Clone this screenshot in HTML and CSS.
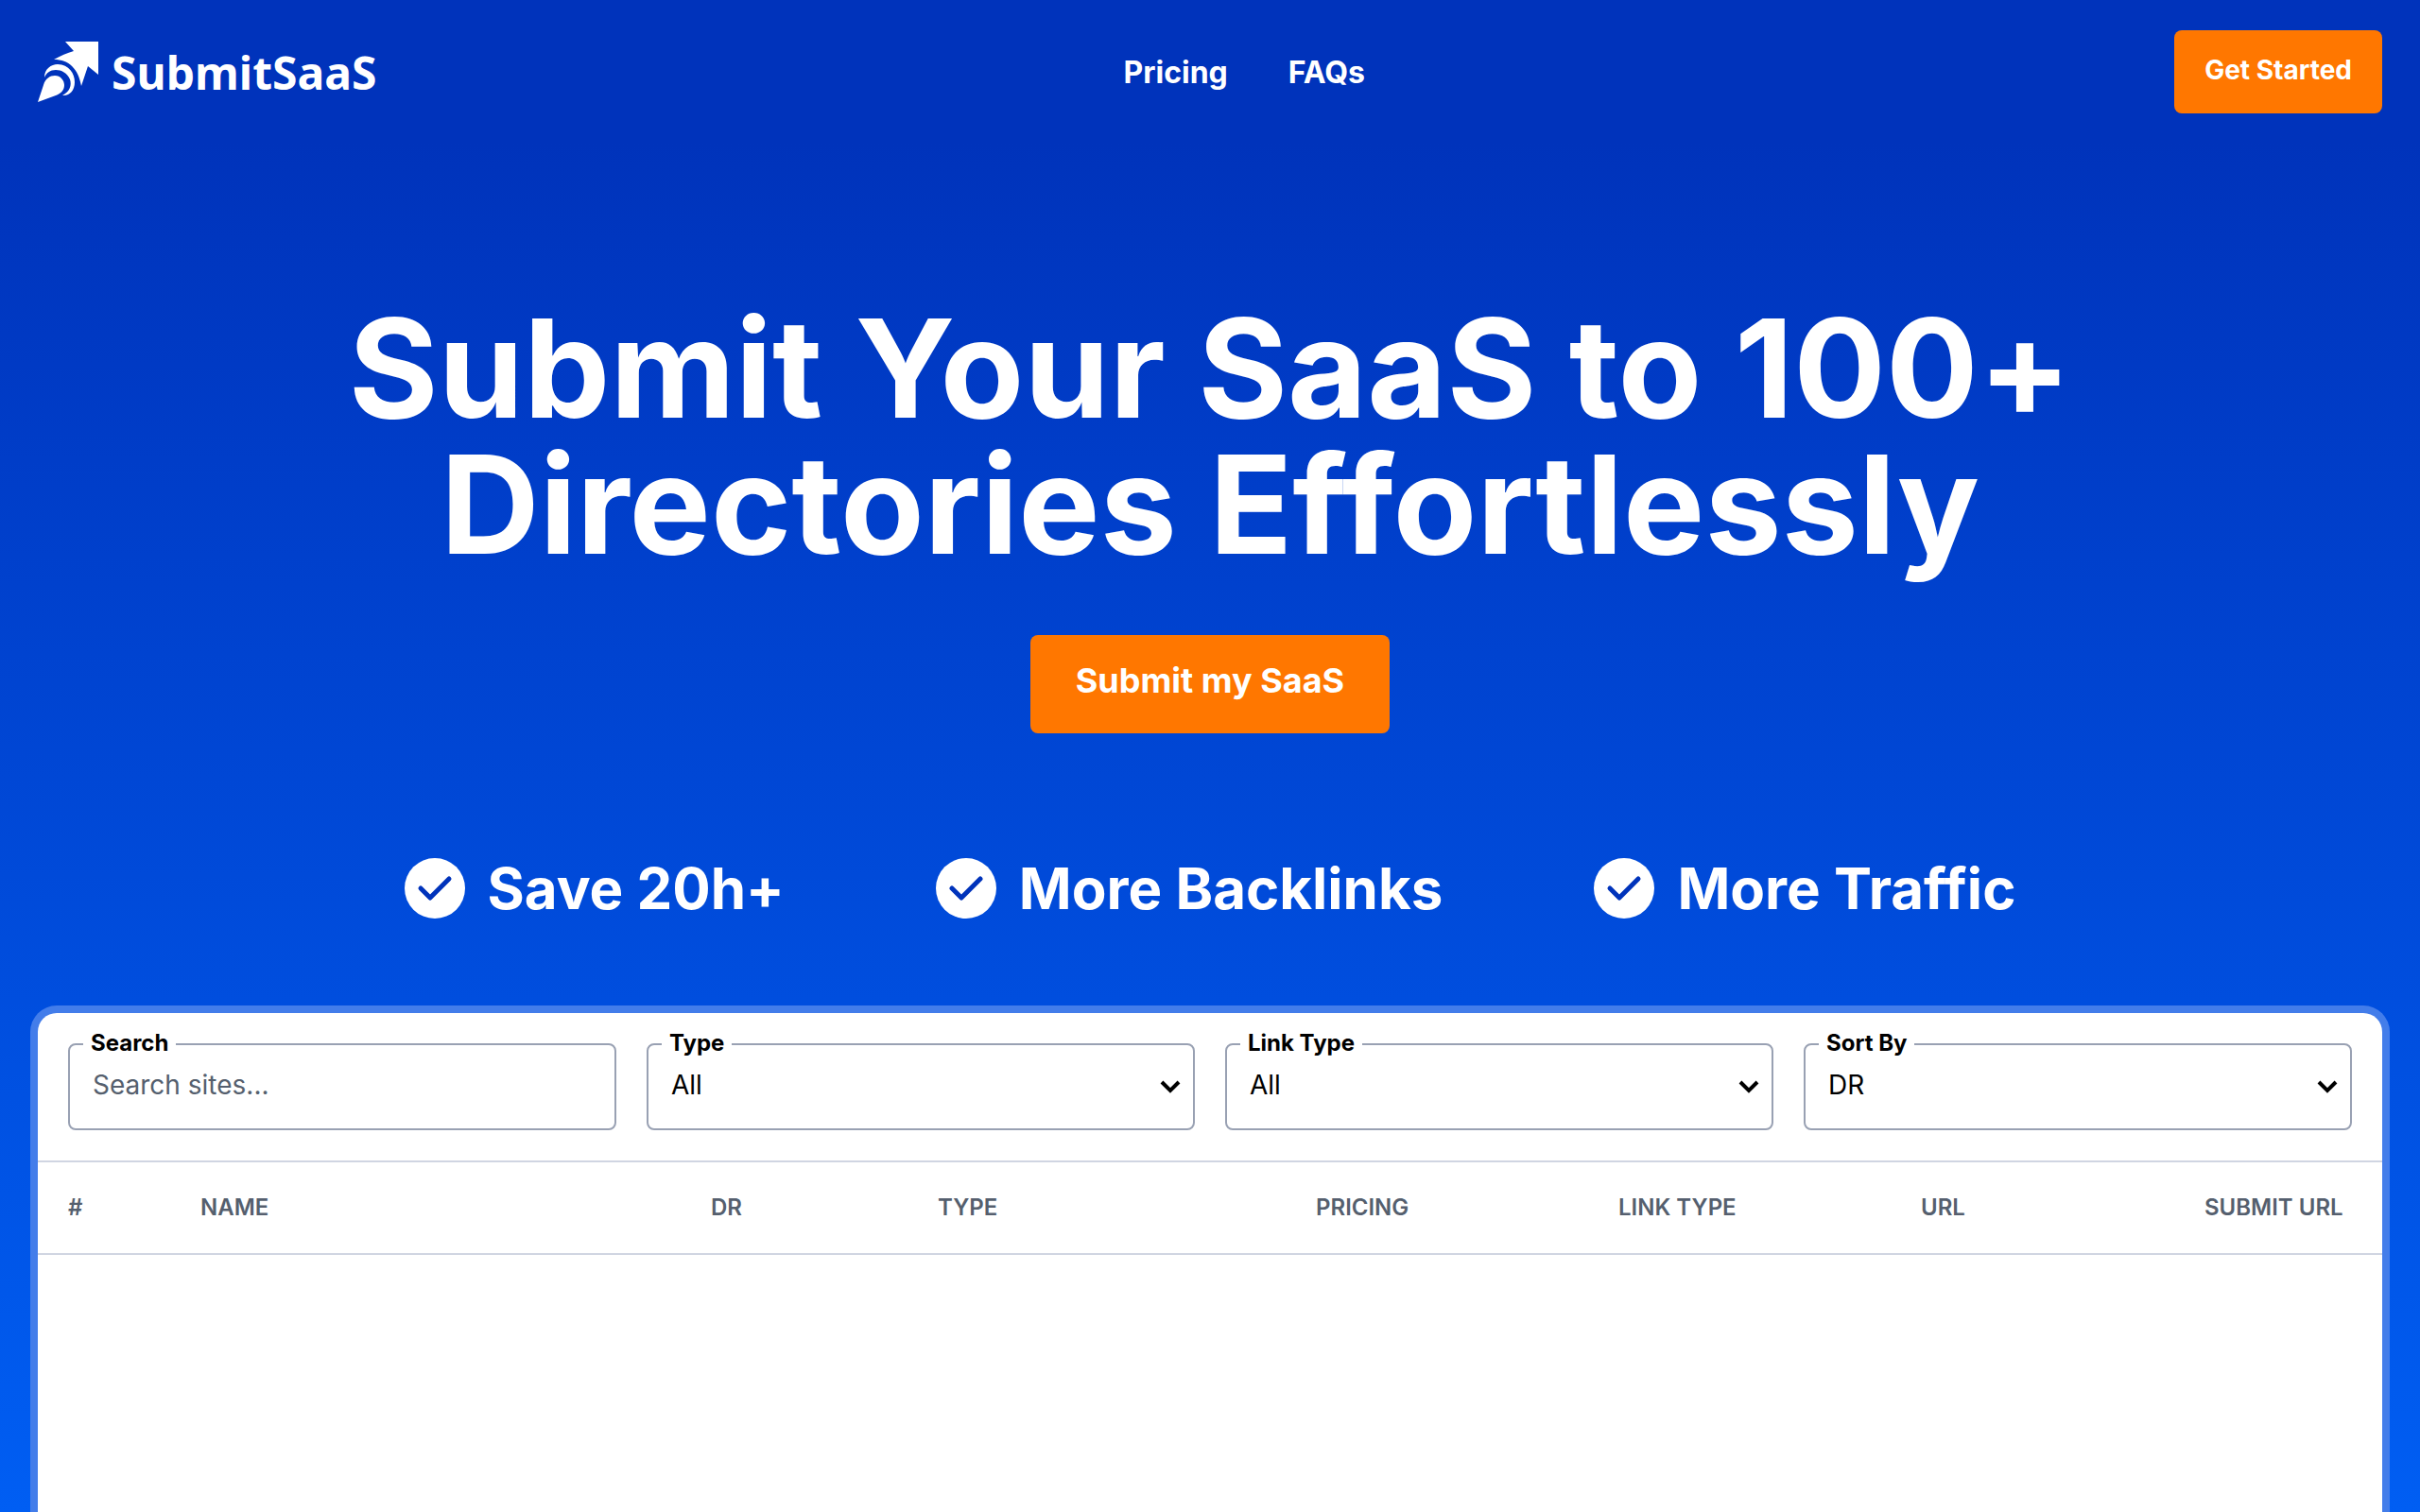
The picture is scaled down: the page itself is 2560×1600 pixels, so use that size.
FILE: index.html
```html
<!DOCTYPE html>
<html lang="en">
<head>
<meta charset="utf-8">
<title>SubmitSaaS</title>
<link rel="stylesheet" href="styles.css">
</head>
<body>
<header class="header">
  <a class="logo" href="#">
    <svg class="logo-mark" viewBox="0 0 64 64" fill="currentColor" aria-hidden="true">
      <path d="M29 0H64V35L53 26L46 47C43 29 33 19 17 19C24 15 31 12 38 10Z"/>
      <path d="M7 38C7 29 14 24 21 24C33 24 39 34 39 43C39 52 33 58 26 57C34 53 36 46 34 40C31 33 25 30 19 30C13 30 9 33 7 38Z"/>
      <path d="M0 64L6 46C8 39 13 36 18 36C24 36 28 41 28 46C28 52 24 55 19 57Z"/>
    </svg>
    <span class="logo-text">SubmitSaaS</span>
  </a>
  <nav class="nav">
    <a href="#pricing">Pricing</a>
    <a href="#faqs">FAQs</a>
  </nav>
  <button class="button" type="button">Get Started</button>
</header>
<main>
  <section class="hero">
    <h1>Submit Your SaaS to 100+ Directories Effortlessly</h1>
    <button class="button button-large" type="button">Submit my SaaS</button>
    <ul class="benefits">
      <li><svg viewBox="0 0 64 64" aria-hidden="true"><circle cx="32" cy="32" r="32"/><path d="M17 32L27 42L47 22"/></svg>Save 20h+</li>
      <li><svg viewBox="0 0 64 64" aria-hidden="true"><circle cx="32" cy="32" r="32"/><path d="M17 32L27 42L47 22"/></svg>More Backlinks</li>
      <li><svg viewBox="0 0 64 64" aria-hidden="true"><circle cx="32" cy="32" r="32"/><path d="M17 32L27 42L47 22"/></svg>More Traffic</li>
    </ul>
  </section>
  <section class="directory">
    <form class="filters">
      <div class="field">
        <label for="search">Search</label>
        <input id="search" type="text" placeholder="Search sites...">
      </div>
      <div class="field">
        <label for="type">Type</label>
        <select id="type"><option>All</option></select>
        <svg viewBox="0 0 20 12" aria-hidden="true"><path d="M1 1L10 10L19 1"/></svg>
      </div>
      <div class="field">
        <label for="link-type">Link Type</label>
        <select id="link-type"><option>All</option></select>
        <svg viewBox="0 0 20 12" aria-hidden="true"><path d="M1 1L10 10L19 1"/></svg>
      </div>
      <div class="field">
        <label for="sort">Sort By</label>
        <select id="sort"><option>DR</option></select>
        <svg viewBox="0 0 20 12" aria-hidden="true"><path d="M1 1L10 10L19 1"/></svg>
      </div>
    </form>
    <table class="sites">
      <colgroup>
        <col class="col-rank"><col class="col-name"><col class="col-dr"><col class="col-type"><col class="col-link"><col class="col-link"><col class="col-url"><col>
      </colgroup>
      <thead>
        <tr><th>#</th><th>Name</th><th>DR</th><th>Type</th><th>Pricing</th><th>Link Type</th><th>URL</th><th>Submit URL</th></tr>
      </thead>
    </table>
  </section>
</main>
</body>
</html>
```

FILE: styles.css
```css
* { box-sizing: border-box; }

body {
  margin: 0;
  min-height: 100vh;
  display: flex;
  flex-direction: column;
  font-family: Inter, sans-serif;
  color: #fff;
  background: linear-gradient(to bottom, #0033bb 150px, #005ef3 1600px);
}

main {
  flex: 1;
  display: flex;
  flex-direction: column;
}

.header {
  display: flex;
  align-items: center;
  justify-content: space-between;
  padding: 32px 40px;
}

.logo {
  display: flex;
  align-items: center;
  gap: 14px;
  color: #fff;
  text-decoration: none;
}

.logo-mark { width: 64px; height: 64px; }

.logo-text {
  padding-top: 2px;
  font: 700 48px/64px "Noto Sans", sans-serif;
}

.nav {
  display: flex;
  gap: 64px;
  margin-right: 66px;
}

.nav a {
  padding-top: 2px;
  font-size: 32px;
  line-height: 48px;
  font-weight: 700;
  color: #fff;
  text-decoration: none;
}

.button {
  padding: 24px 32px 28px;
  border: 0;
  border-radius: 8px;
  background: #ff7700;
  color: #fff;
  font: 700 28px/36px Inter, sans-serif;
}

.button-large {
  padding: 28px 48px 36px;
  font-size: 36px;
  line-height: 40px;
}

.hero {
  display: flex;
  flex-direction: column;
  align-items: center;
  padding: 166px 40px 88px;
}

h1 {
  margin: 0 0 66px;
  max-width: 2048px;
  font-size: 145px;
  line-height: 144px;
  font-weight: 700;
  font-variant-ligatures: none;
  text-align: center;
}

.benefits {
  display: flex;
  flex-wrap: wrap;
  justify-content: center;
  gap: 160px;
  margin: 128px 0 0;
  padding: 0;
  list-style: none;
  font-size: 60px;
  line-height: 72px;
  font-weight: 700;
}

.benefits li { display: flex; align-items: center; gap: 24px; }
.benefits svg { width: 64px; height: 64px; }
.benefits circle { fill: #fff; }

.benefits path {
  fill: none;
  stroke: #0033bb;
  stroke-width: 5;
  stroke-linecap: round;
  stroke-linejoin: round;
}

.directory {
  flex: 1;
  margin: 0 32px;
  border: 8px solid #437dea;
  border-bottom: 0;
  border-radius: 28px 28px 0 0;
  background: #fff;
  color: #000;
}

.filters {
  display: grid;
  grid-template-columns: repeat(4, 1fr);
  gap: 32px;
  padding: 32px;
}

.field { position: relative; }

.field label {
  position: absolute;
  top: -16px;
  left: 16px;
  padding: 0 8px;
  background: #fff;
  font-size: 24px;
  line-height: 32px;
  font-weight: 700;
}

.field input,
.field select {
  display: block;
  width: 100%;
  height: 92px;
  padding: 0 24px 4px;
  border: 2px solid #99a1b3;
  border-radius: 8px;
  background: transparent;
  color: #000;
  font: 400 28px/40px Inter, sans-serif;
  appearance: none;
}

.field input::placeholder { color: #555f6e; opacity: 1; }

.field svg {
  position: absolute;
  right: 16px;
  top: 40px;
  width: 20px;
  height: 12px;
  overflow: visible;
  fill: none;
  stroke: #000;
  stroke-width: 4;
  pointer-events: none;
}

.sites {
  width: 100%;
  table-layout: fixed;
  border-collapse: collapse;
}

.sites tr {
  border-top: 2px solid #d0d5e2;
  border-bottom: 2px solid #d0d5e2;
}

.sites th {
  padding: 32px 0 32px 32px;
  font-size: 24px;
  line-height: 32px;
  font-weight: 600;
  text-align: left;
  text-transform: uppercase;
  color: #555f6e;
}

.col-rank { width: 140px; }
.col-name { width: 540px; }
.col-dr { width: 240px; }
.col-type { width: 400px; }
.col-link { width: 320px; }
.col-url { width: 300px; }
```
